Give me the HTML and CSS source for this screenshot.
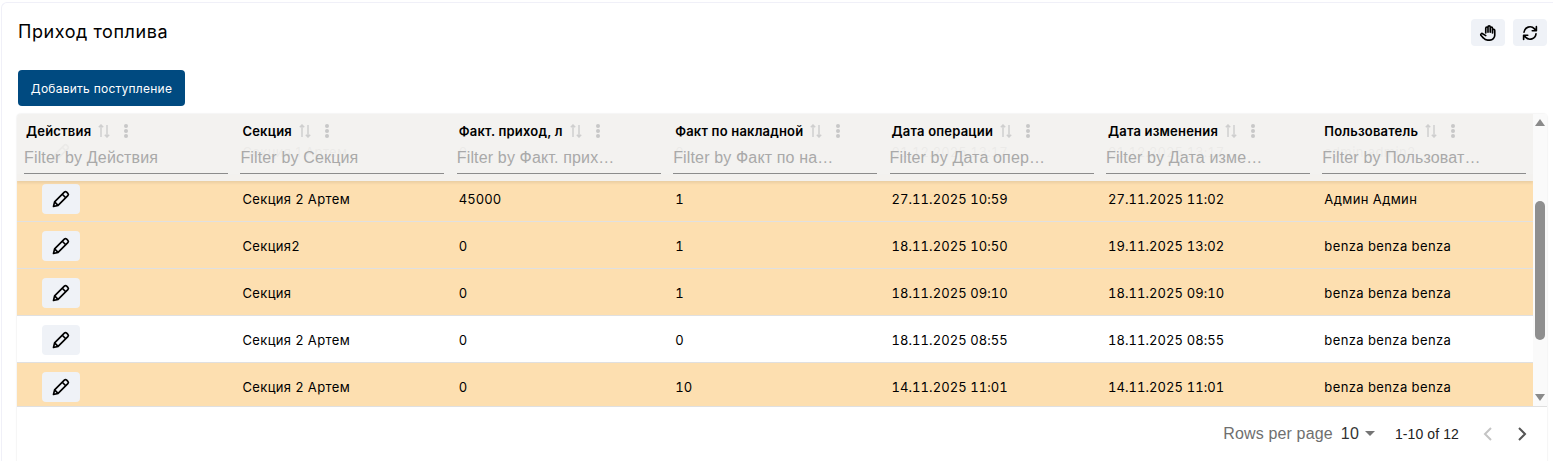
FILE: index.html
```html
<!DOCTYPE html>
<html lang="en">

<head>
    <meta charset="UTF-8">
    <title>Приход топлива</title>
    <link rel="stylesheet" href="styles.css">
</head>

<body>
    <svg class="sprite" width="0" height="0">
        <symbol id="pencil" viewBox="0 0 24 24">
            <path d="M3 21l1.300-5.500L16 3.800a2 2 0 0 1 2.800 0l1.400 1.400a2 2 0 0 1 0 2.800L8.500 19.700z" fill="none" stroke="currentColor" stroke-width="2" stroke-linejoin="round"/>
            <path d="M13.500 6.300l4.200 4.200M4.300 15.500l4.200 4.200" fill="none" stroke="currentColor" stroke-width="2"/>
        </symbol>
        <symbol id="sort" viewBox="0 0 14 14">
            <path d="M4 13V1M1.800 3.200L4 1l2.200 2.200M10 1v12M7.800 10.800L10 13l2.200-2.200" fill="none" stroke="currentColor" stroke-width="1.500"/>
        </symbol>
    </svg>

    <div class="card">
        <div class="top">
            <h1>Приход топлива</h1>
            <div class="tools">
                <button class="tool">
                    <svg width="18" height="18" viewBox="0 0 24 24" fill="none" stroke="currentColor" stroke-width="2.200" stroke-linecap="round" stroke-linejoin="round">
                        <path d="M9 12V5.500a1.500 1.500 0 0 1 3 0V11M12 11V4a1.500 1.500 0 0 1 3 0v7M15 11V5.500a1.500 1.500 0 0 1 3 0V12M18 8.500a1.500 1.500 0 0 1 3 0V15a6.500 6.500 0 0 1-6.500 6.500h-3a7 7 0 0 1-5.500-2.700L2.500 15a1.600 1.600 0 0 1 2.400-2L9 15.500"/>
                    </svg>
                </button>
                <button class="tool">
                    <svg width="18" height="18" viewBox="0 0 24 24" fill="none" stroke="currentColor" stroke-width="2.200" stroke-linecap="round" stroke-linejoin="round">
                        <path d="M4 11a8 8 0 0 1 14-4.500l2 2.500M20.500 3.500V9H15M20 13a8 8 0 0 1-14 4.500L4 15M3.500 20.500V15H9"/>
                    </svg>
                </button>
            </div>
        </div>

        <button class="add">Добавить поступление</button>

        <div class="paper">
            <div class="grid">
                <div class="head">
                    <div class="hcell">
                        <div class="htitle"><b>Действия</b><svg class="sort"><use href="#sort"/></svg><span class="dots"></span></div>
                        <div class="filter">Filter by Действия</div>
                    </div>
                    <div class="hcell">
                        <div class="htitle"><b>Секция</b><svg class="sort"><use href="#sort"/></svg><span class="dots"></span></div>
                        <div class="filter">Filter by Секция</div>
                    </div>
                    <div class="hcell">
                        <div class="htitle"><b>Факт. приход, л</b><svg class="sort"><use href="#sort"/></svg><span class="dots"></span></div>
                        <div class="filter">Filter by Факт. прих…</div>
                    </div>
                    <div class="hcell">
                        <div class="htitle"><b>Факт по накладной</b><svg class="sort"><use href="#sort"/></svg><span class="dots"></span></div>
                        <div class="filter">Filter by Факт по на…</div>
                    </div>
                    <div class="hcell">
                        <div class="htitle"><b>Дата операции</b><svg class="sort"><use href="#sort"/></svg><span class="dots"></span></div>
                        <div class="filter">Filter by Дата опер…</div>
                    </div>
                    <div class="hcell">
                        <div class="htitle"><b>Дата изменения</b><svg class="sort"><use href="#sort"/></svg><span class="dots"></span></div>
                        <div class="filter">Filter by Дата изме…</div>
                    </div>
                    <div class="hcell">
                        <div class="htitle"><b>Пользователь</b><svg class="sort"><use href="#sort"/></svg><span class="dots"></span></div>
                        <div class="filter">Filter by Пользоват…</div>
                    </div>
                </div>

                <div class="rows">
                    <div class="row">
                        <div class="cell"><button class="edit"><svg width="20" height="20"><use href="#pencil"/></svg></button></div>
                        <div class="cell">Секция 1 Артем</div><div class="cell num">0</div><div class="cell num">0</div>
                        <div class="cell num">01.12.2025 13:17</div><div class="cell num">01.12.2025 13:17</div><div class="cell">admin admin2</div>
                    </div>
                    <div class="row hl">
                        <div class="cell"><button class="edit"><svg width="20" height="20"><use href="#pencil"/></svg></button></div>
                        <div class="cell">Секция 2 Артем</div><div class="cell num">45000</div><div class="cell num">1</div>
                        <div class="cell num">27.11.2025 10:59</div><div class="cell num">27.11.2025 11:02</div><div class="cell">Админ Админ</div>
                    </div>
                    <div class="row hl">
                        <div class="cell"><button class="edit"><svg width="20" height="20"><use href="#pencil"/></svg></button></div>
                        <div class="cell">Секция2</div><div class="cell num">0</div><div class="cell num">1</div>
                        <div class="cell num">18.11.2025 10:50</div><div class="cell num">19.11.2025 13:02</div><div class="cell">benza benza benza</div>
                    </div>
                    <div class="row hl">
                        <div class="cell"><button class="edit"><svg width="20" height="20"><use href="#pencil"/></svg></button></div>
                        <div class="cell">Секция</div><div class="cell num">0</div><div class="cell num">1</div>
                        <div class="cell num">18.11.2025 09:10</div><div class="cell num">18.11.2025 09:10</div><div class="cell">benza benza benza</div>
                    </div>
                    <div class="row">
                        <div class="cell"><button class="edit"><svg width="20" height="20"><use href="#pencil"/></svg></button></div>
                        <div class="cell">Секция 2 Артем</div><div class="cell num">0</div><div class="cell num">0</div>
                        <div class="cell num">18.11.2025 08:55</div><div class="cell num">18.11.2025 08:55</div><div class="cell">benza benza benza</div>
                    </div>
                    <div class="row hl">
                        <div class="cell"><button class="edit"><svg width="20" height="20"><use href="#pencil"/></svg></button></div>
                        <div class="cell">Секция 2 Артем</div><div class="cell num">0</div><div class="cell num">10</div>
                        <div class="cell num">14.11.2025 11:01</div><div class="cell num">14.11.2025 11:01</div><div class="cell">benza benza benza</div>
                    </div>
                </div>

                <div class="scrollbar">
                    <span class="arrow-up"></span>
                    <span class="thumb"></span>
                    <span class="arrow-down"></span>
                </div>
            </div>

            <div class="pager">
                <span class="rpp">Rows per page</span>
                <span class="rpp-val">10</span>
                <span class="caret"></span>
                <span class="range">1-10 of 12</span>
                <svg class="nav off" width="24" height="24" viewBox="0 0 24 24"><path d="M15 6l-6 6 6 6" fill="none" stroke="currentColor" stroke-width="2"/></svg>
                <svg class="nav" width="24" height="24" viewBox="0 0 24 24"><path d="M9 6l6 6-6 6" fill="none" stroke="currentColor" stroke-width="2"/></svg>
            </div>
        </div>
    </div>
</body>

</html>
```

FILE: styles.css
```css
body {
    font-family: Inter, "Noto Sans", sans-serif;
    background-color: #fff;
    margin: 0;
    color: #000;
}

.sprite {
    display: block;
    height: 0;
}

.card {
    background: #fff;
    margin: 2px 0 0 1px;
    height: 459px;
    box-sizing: border-box;
    border-radius: 6px 0 0 0;
    padding: 16px 0 0 16px;
    border-top: 1px solid #f0f0f8;
    border-left: 1px solid #f0f0f8;
    overflow: hidden;
}

.top {
    display: flex;
    justify-content: space-between;
    width: 1529px;
    height: 51px;
}

h1 {
    font-size: 18px;
    font-weight: 400;
    letter-spacing: 0.55px;
    line-height: 26px;
    margin: 0;
}

.tools {
    display: flex;
    gap: 8px;
}

.tool {
    width: 34px;
    height: 27px;
    border: none;
    border-radius: 4px;
    background-color: #eff2f7;
    color: #000;
    padding: 0;
    display: flex;
    align-items: center;
    justify-content: center;
}

.add {
    display: block;
    width: 167px;
    height: 36px;
    border: none;
    border-radius: 4px;
    background-color: #004a80;
    color: #fff;
    font-family: inherit;
    font-size: 12px;
    letter-spacing: 0.25px;
    padding: 0;
}

.paper {
    margin: 8px 0 0 -1px;
    width: 1530px;
    height: 400px;
    box-shadow: 0 0 2px rgba(0, 0, 0, 0.14);
    border-radius: 4px;
}

.grid {
    position: relative;
    height: 292px;
    overflow: hidden;
    border-bottom: 1px solid #e0e0e0;
}

.head {
    position: absolute;
    top: 0;
    left: 0;
    width: 1516px;
    height: 67px;
    display: grid;
    grid-template-columns: repeat(7, 216.400px);
    background: rgba(243, 242, 240, 0.97);
    box-shadow: 0 2px 3px rgba(0, 0, 0, 0.08);
    z-index: 1;
    border-radius: 4px 0 0 0;
}

.hcell {
    padding: 6px 0 0 7px;
    min-width: 0;
}

.htitle {
    display: flex;
    align-items: center;
    height: 22px;
    padding-left: 2px;
    font-size: 13px;
    letter-spacing: 0.2px;
}

.htitle b {
    font-weight: 600;
}

.sort {
    width: 14px;
    height: 14px;
    margin-left: 6px;
    color: #cfcfcf;
}

.dots {
    width: 4px;
    height: 4px;
    border-radius: 50%;
    background: #c8c8c8;
    margin-left: 13px;
    box-shadow: 0 -5px 0 #c8c8c8, 0 5px 0 #c8c8c8;
}

.filter {
    font-family: "Liberation Sans", sans-serif;
    font-size: 16px;
    letter-spacing: 0.15px;
    color: #a9a9a9;
    width: 204px;
    height: 30px;
    line-height: 30px;
    margin-top: 1px;
    border-bottom: 1px solid #8c8c8c;
    white-space: nowrap;
    overflow: hidden;
}

.rows {
    width: 1516px;
    margin-top: 14px;
}

.row {
    display: grid;
    grid-template-columns: repeat(7, 216.400px);
    height: 47px;
    box-sizing: border-box;
    border-bottom: 1px solid #e0e0e0;
    align-items: center;
    font-size: 13px;
    letter-spacing: 0.38px;
}

.row.hl {
    background-color: #fddfb0;
}

.cell {
    padding: 1px 0 0 9px;
}

.num {
    letter-spacing: 0.07px;
    font-feature-settings: "tnum";
}

.edit {
    margin-left: 16px;
    width: 38px;
    height: 30px;
    border: none;
    border-radius: 4px;
    background-color: #eff2f7;
    color: #000;
    padding: 0;
    display: flex;
    align-items: center;
    justify-content: center;
}

.scrollbar {
    position: absolute;
    top: 0;
    right: 0;
    width: 14px;
    height: 100%;
    background: #fafafa;
    z-index: 2;
}

.thumb {
    position: absolute;
    left: 2px;
    top: 87px;
    width: 10px;
    height: 139px;
    border-radius: 5px;
    background: #8f8f8f;
}

.arrow-up,
.arrow-down {
    position: absolute;
    left: 2px;
    width: 0;
    height: 0;
    border-left: 5px solid transparent;
    border-right: 5px solid transparent;
}

.arrow-up {
    top: 5px;
    border-bottom: 7px solid #8a8a8a;
}

.arrow-down {
    bottom: 5px;
    border-top: 7px solid #8a8a8a;
}

.pager {
    display: flex;
    align-items: center;
    justify-content: flex-end;
    height: 53px;
    padding-right: 13px;
    font-family: "Liberation Sans", sans-serif;
}

.rpp {
    font-size: 16px;
    letter-spacing: 0.15px;
    color: #6f6f6f;
}

.rpp-val {
    font-size: 16px;
    letter-spacing: 0.15px;
    color: #333;
    margin-left: 8px;
}

.caret {
    width: 0;
    height: 0;
    margin-left: 6px;
    border-left: 5px solid transparent;
    border-right: 5px solid transparent;
    border-top: 5px solid #757575;
}

.range {
    font-size: 14px;
    letter-spacing: 0.1px;
    color: #222;
    margin-left: 20px;
    margin-right: 17px;
}

.nav {
    color: #555;
    margin-right: 10px;
    width: 24px;
}

.nav.off {
    color: #c4c4c4;
}

.nav:last-child {
    margin-right: 0;
}
```
